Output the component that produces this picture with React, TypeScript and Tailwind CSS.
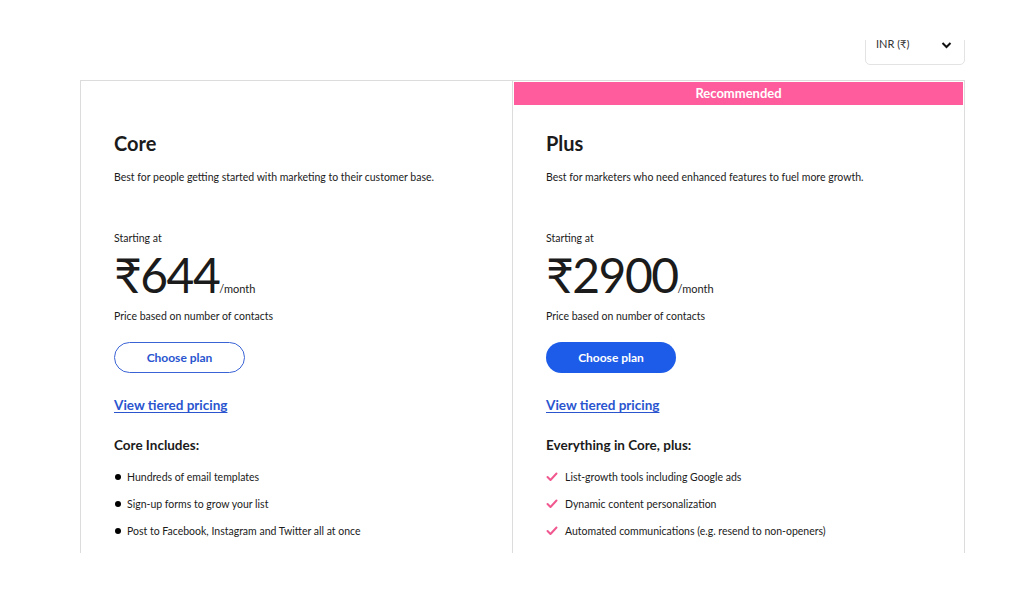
const font = "font-['Lato','Noto_Sans',sans-serif]";

interface PlanProps {
  name: string;
  blurb: string;
  price: string;
  heading: string;
  features: string[];
  recommended?: boolean;
  primary?: boolean;
  check?: boolean;
  className?: string;
}

function Check() {
  return (
    <svg width="12" height="10" viewBox="0 0 12 10" className="shrink-0">
      <polyline points="1.5,5 4.5,8 10.5,1.5" fill="none" stroke="#f0588f" strokeWidth="2" strokeLinecap="round" strokeLinejoin="round" />
    </svg>
  );
}

function Plan({ name, blurb, price, heading, features, recommended, primary, check, className }: PlanProps) {
  return (
    <div className={className}>
      {recommended ? (
        <div className="mx-px mt-px flex h-[23px] items-center justify-center bg-[#ff5c9d] text-[13px] font-bold text-white">
          Recommended
        </div>
      ) : (
        <div className="h-[24px]" />
      )}
      <div className="px-[33px] text-[#1b1b1b]">
        <h2 className="mt-[26px] text-[20px] font-bold leading-[24px]">{name}</h2>
        <p className="mt-[15px] text-[10.5px] leading-[14px]">{blurb}</p>
        <p className="mt-[47px] text-[10.5px] leading-[14px]">Starting at</p>
        <div className="mt-[6px] flex items-baseline">
          <span className="text-[48px] leading-[48px] tracking-[-1.5px]">{price}</span>
          <span className="text-[11px]">/month</span>
        </div>
        <p className="mt-[10px] text-[10.5px] leading-[14px]">Price based on number of contacts</p>
        <button
          className={
            primary
              ? "mt-[19px] flex h-[31px] w-[130px] items-center justify-center rounded-full bg-[#1d5ce8] text-[12px] font-bold text-white"
              : "mt-[19px] flex h-[31px] w-[131px] items-center justify-center rounded-full border border-[#3a63d6] text-[12px] font-bold text-[#2a55cf]"
          }
        >
          Choose plan
        </button>
        <a className="mt-[24px] block text-[13.5px] font-bold leading-[16px] text-[#2a55cf] underline underline-offset-2">
          View tiered pricing
        </a>
        <h3 className="mt-[24px] text-[13.5px] font-bold leading-[16px]">{heading}</h3>
        <ul className="mt-[17px] flex flex-col gap-[13px]">
          {features.map((f) => (
            <li key={f} className="flex h-[14px] items-center text-[10.5px] leading-[14px]">
              {check ? (
                <span className="mr-[7px] flex w-[12px] justify-center"><Check /></span>
              ) : (
                <span className="ml-[1px] mr-[6px] h-[6px] w-[6px] rounded-full bg-black" />
              )}
              {f}
            </li>
          ))}
          {check && (
            <li className="flex h-[14px] items-center">
              <span className="mr-[7px] flex w-[12px] justify-center"><Check /></span>
            </li>
          )}
        </ul>
      </div>
    </div>
  );
}

export default function App() {
  return (
    <div className={`h-[600px] w-[1025px] overflow-hidden bg-white pt-[40px] ${font}`}>
      <div className="h-[513px] overflow-hidden">
        <div className="flex justify-end pr-[60px]">
          <div className="-mt-[16px] flex h-[41px] w-[100px] items-center justify-between rounded-[5px] border border-[#e3e3e3] pl-[10px] pr-[12px]">
            <span className="text-[11px] text-[#333]">INR (₹)</span>
            <svg width="11" height="8" viewBox="0 0 11 8">
              <polyline points="1.5,2 5.5,6 9.5,2" fill="none" stroke="#111" strokeWidth="2" />
            </svg>
          </div>
        </div>
        <div className="ml-[80px] mt-[15px] flex w-[885px]">
          <Plan
            className="h-[600px] w-[433px] border border-[#dcdcdc]"
            name="Core"
            blurb="Best for people getting started with marketing to their customer base."
            price="₹644"
            heading="Core Includes:"
            features={[
              "Hundreds of email templates",
              "Sign-up forms to grow your list",
              "Post to Facebook, Instagram and Twitter all at once",
            ]}
          />
          <Plan
            className="h-[600px] flex-1 border-y border-r border-[#dcdcdc]"
            name="Plus"
            blurb="Best for marketers who need enhanced features to fuel more growth."
            price="₹2900"
            heading="Everything in Core, plus:"
            recommended
            primary
            check
            features={[
              "List-growth tools including Google ads",
              "Dynamic content personalization",
              "Automated communications (e.g. resend to non-openers)",
            ]}
          />
        </div>
      </div>
    </div>
  );
}
